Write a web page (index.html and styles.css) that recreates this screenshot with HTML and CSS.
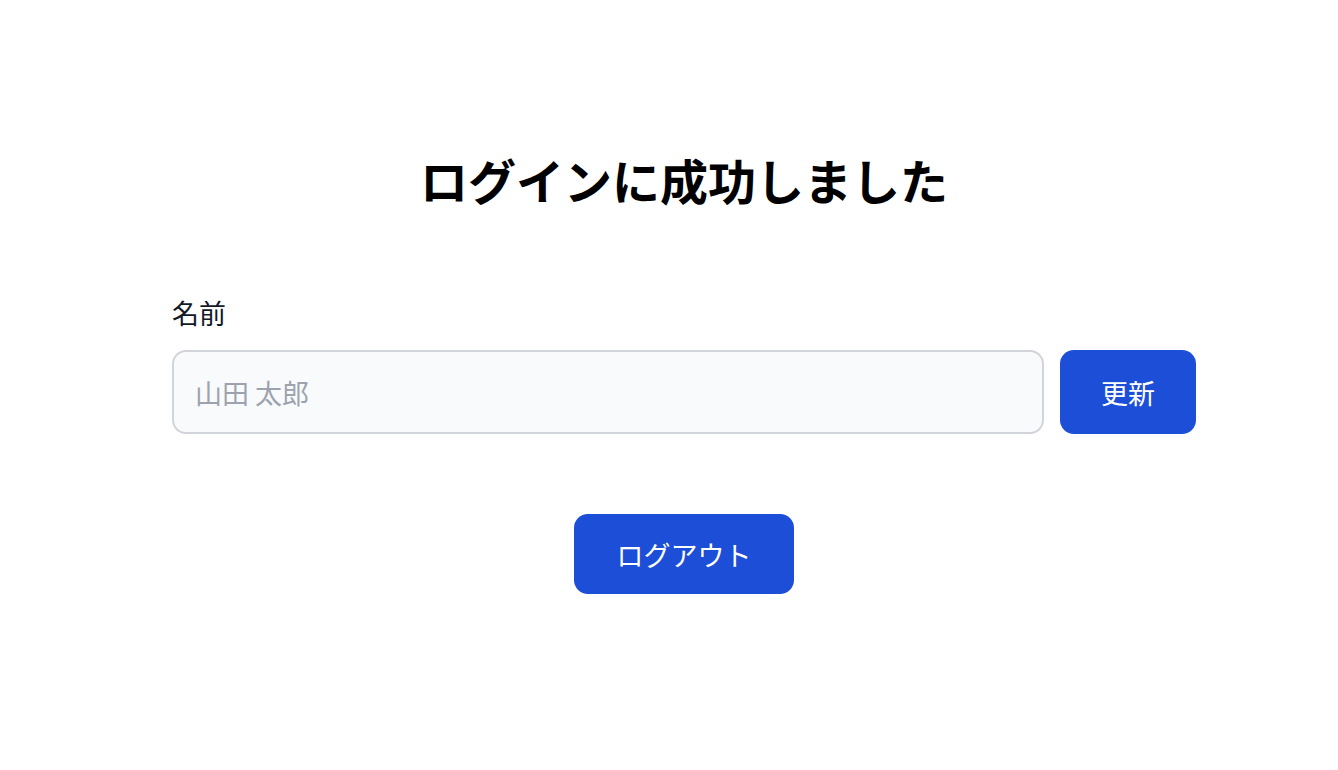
FILE: index.html
```html
<!DOCTYPE html>
<html lang="ja">
<head>
<meta charset="utf-8">
<title>ログイン成功</title>
<link rel="stylesheet" href="styles.css">
</head>
<body>
<main class="page">
  <h1 class="title">ログインに成功しました</h1>
  <form class="form">
    <label class="label" for="name">名前</label>
    <div class="row">
      <input id="name" class="input" type="text" placeholder="山田 太郎">
      <button type="button" class="btn btn-update">更新</button>
    </div>
  </form>
  <div class="logout-wrap">
    <button type="button" class="btn btn-logout">ログアウト</button>
  </div>
</main>
</body>
</html>
```

FILE: styles.css
```css
html, body {
  margin: 0;
  padding: 0;
  background: #ffffff;
}
body {
  font-family: "Noto Sans CJK JP", "Noto Sans", sans-serif;
  color: #111827;
}
.page {
  width: 1024px;
  margin-left: 172px;
  padding-top: 143px;
  display: flex;
  flex-direction: column;
}
.title {
  margin: 0;
  text-align: center;
  font-size: 48px;
  font-weight: 700;
  line-height: 72px;
  color: #000000;
}
.form {
  margin-top: 78px;
  display: flex;
  flex-direction: column;
}
.label {
  font-size: 27px;
  line-height: 40px;
  color: #111827;
}
.row {
  margin-top: 17px;
  display: flex;
  gap: 16px;
}
.input {
  flex: 1;
  height: 84px;
  box-sizing: border-box;
  border: 2px solid #d1d5db;
  border-radius: 14px;
  background: #f9fafb;
  padding: 0 21px;
  font-family: inherit;
  font-size: 27px;
  color: #111827;
  outline: none;
}
.input::placeholder {
  color: #9ca3af;
}
.btn {
  border: none;
  background: #1d4ed8;
  color: #ffffff;
  font-family: inherit;
  font-size: 27px;
  border-radius: 14px;
  cursor: pointer;
}
.btn-update {
  width: 136px;
  height: 84px;
}
.logout-wrap {
  margin-top: 80px;
  display: flex;
  justify-content: center;
}
.btn-logout {
  width: 220px;
  height: 80px;
}
```
